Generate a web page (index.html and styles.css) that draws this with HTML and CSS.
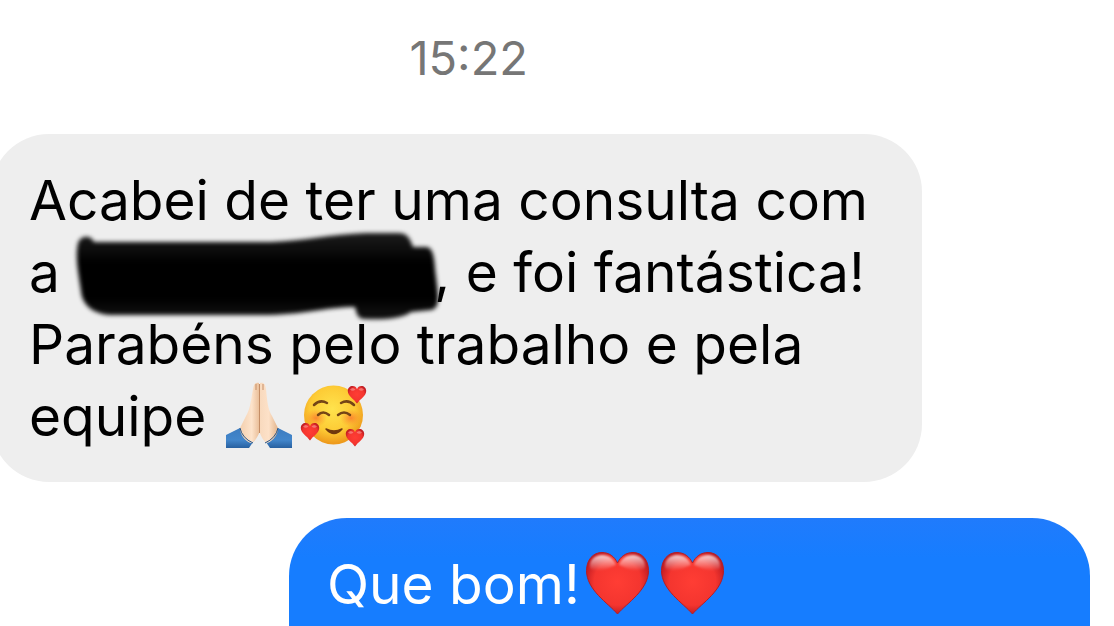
FILE: index.html
```html
<!DOCTYPE html>
<html lang="pt-BR">
<head>
<meta charset="utf-8">
<meta name="viewport" content="width=device-width, initial-scale=1">
<title>Conversa</title>
<link rel="stylesheet" href="styles.css">
</head>
<body>
<svg class="defs" aria-hidden="true">
  <defs>
    <radialGradient id="heartRed" cx="50%" cy="48%" r="58%">
      <stop offset="0" stop-color="#ff3d34"/>
      <stop offset=".65" stop-color="#f4352f"/>
      <stop offset="1" stop-color="#b5161f"/>
    </radialGradient>
    <linearGradient id="gloss" x1="0" y1="0" x2="0" y2="1">
      <stop offset="0" stop-color="#fff" stop-opacity=".8"/>
      <stop offset="1" stop-color="#fff" stop-opacity="0"/>
    </linearGradient>
    <radialGradient id="face" cx="48%" cy="40%" r="58%">
      <stop offset="0" stop-color="#ffe34d"/>
      <stop offset=".65" stop-color="#fdcb35"/>
      <stop offset="1" stop-color="#ee9a1c"/>
    </radialGradient>
    <radialGradient id="blush">
      <stop offset="0" stop-color="#fb6f2c" stop-opacity=".75"/>
      <stop offset="1" stop-color="#fb8f2c" stop-opacity="0"/>
    </radialGradient>
    <linearGradient id="skinLeft">
      <stop offset="0" stop-color="#f3cfae"/>
      <stop offset=".6" stop-color="#fde3cb"/>
      <stop offset="1" stop-color="#e9bd97"/>
    </linearGradient>
    <linearGradient id="skinRight">
      <stop offset="0" stop-color="#f8d9bd"/>
      <stop offset=".5" stop-color="#fde1c8"/>
      <stop offset="1" stop-color="#e2b38a"/>
    </linearGradient>
    <linearGradient id="sleeve" x1="0" y1="0" x2="0" y2="1">
      <stop offset="0" stop-color="#3d7cc0"/>
      <stop offset=".6" stop-color="#4286cb"/>
      <stop offset="1" stop-color="#28609f"/>
    </linearGradient>
    <linearGradient id="ink" x1="0" y1="0" x2="0" y2="1">
      <stop offset="0" stop-color="#1c1c1c"/>
      <stop offset=".35" stop-color="#000"/>
      <stop offset=".75" stop-color="#000"/>
      <stop offset="1" stop-color="#141414"/>
    </linearGradient>
    <filter id="soft" x="-5%" y="-15%" width="110%" height="130%" color-interpolation-filters="sRGB">
      <feGaussianBlur stdDeviation="2"/>
    </filter>
    <filter id="glow" x="-20%" y="-20%" width="140%" height="140%">
      <feGaussianBlur stdDeviation="1"/>
    </filter>
    <symbol id="heart" viewBox="0 0 75 66">
      <path d="M37.500 64C28 53 6.500 40 6.500 20.500C6.500 10 13 2.500 22 2.500C29 2.500 34.500 6.500 37.500 13C40.500 6.500 46 2.500 53 2.500C62 2.500 68.500 10 68.500 20.500C68.500 40 47 53 37.500 64Z" fill="url(#heartRed)" stroke="#b51d25" stroke-width="1"/>
      <path d="M10 18C9 10 15 5 22 5C29 5 34 9 36 15C28 18 18 24 10 18Z" fill="url(#gloss)" filter="url(#glow)"/>
      <path d="M65 18C66 10 60 5 53 5C46 5 41 9 39 15C47 18 57 24 65 18Z" fill="url(#gloss)" filter="url(#glow)"/>
    </symbol>
    <symbol id="miniHeart" viewBox="0 0 20 20">
      <path d="M10 18.500C7 14 .8 11 .8 6C.8 3 3 1 5.600 1C7.700 1 9.300 2.200 10 4.200C10.700 2.200 12.300 1 14.400 1C17 1 19.200 3 19.200 6C19.200 11 13 14 10 18.500Z" fill="url(#heartRed)"/>
      <path d="M3 4.500Q5.500 1.500 8.500 4.500Q5.500 7 3 4.500ZM11.500 4.500Q14.500 1.500 17 4.500Q14.500 7 11.500 4.500Z" fill="#fff" opacity=".3"/>
    </symbol>
  </defs>
</svg>
<main class="chat">
  <time class="chat-time" datetime="15:22">15:22</time>

  <p class="bubble bubble-in">Acabei de ter uma consulta com a <svg class="scribble" viewBox="74 233 363 88" role="img" aria-label="Nome ocultado">
      <path fill="url(#ink)" filter="url(#soft)" d="M77 244C80 236 90 236 93 243H270C304 242 330 235 365 234H397C407 234 409 240 412 248H426C434 250 433 264 435 278C437 296 440 309 430 311L410 313C401 320 380 321 363 320C356 320 355 312 354 308C326 308 303 316 260 316H108C89 314 81 304 80 292C77 272 74 257 77 244Z"/>
    </svg>, e foi fantástica! Parabéns pelo trabalho e pela equipe <svg class="emoji" viewBox="0 0 75 66" role="img" aria-label="Mãos em oração">
      <path d="M4 53L18 46L33 57L27 66H4Z" fill="url(#sleeve)"/>
      <path d="M70 53L56 46L42 57L48 66H70Z" fill="url(#sleeve)"/>
      <path d="M37 1C33 0 32 2 31 7C29 18 28 28 24 34L18 46C18 54 25 61 30 61C34 58 36 54 37.500 50Z" fill="url(#skinLeft)"/>
      <path d="M38 1C42 0 43 2 44 7C45 18 46 28 50 34L56 46C56 54 49 61 44 61C41 58 39 54 37.500 50Z" fill="url(#skinRight)"/>
      <path d="M37.500 2V51M34 2V8M41 2V8" fill="none" stroke="#c58e66" stroke-width="1"/>
      <path d="M18 46Q20 56 31 61M56 46Q54 56 43 61" fill="none" stroke="#245387" stroke-width="1"/>
    </svg><svg class="emoji" viewBox="0 0 75 66" role="img" aria-label="Rosto sorridente com corações">
      <circle cx="36.500" cy="33" r="29.500" fill="url(#face)"/>
      <ellipse cx="19" cy="36" rx="11" ry="9" fill="url(#blush)"/>
      <ellipse cx="54" cy="36" rx="11" ry="9" fill="url(#blush)"/>
      <path d="M17 23Q23 17 30 21M44 21Q51 17 57 23M21 33Q26 28 32 33M41 33Q47 28 53 33" fill="none" stroke="#754516" stroke-width="2.500" stroke-linecap="round"/>
      <path d="M29 47Q37 56 45 47Q37 51 29 47Z" fill="#70390e" stroke="#70390e" stroke-width="1.500" stroke-linejoin="round"/>
      <use href="#miniHeart" x="50" y="3" width="20" height="20"/>
      <use href="#miniHeart" x="3" y="40" width="20" height="20"/>
      <use href="#miniHeart" x="48" y="46" width="20" height="20"/>
    </svg></p>

  <p class="bubble bubble-out">Que bom!<svg class="emoji" role="img" aria-label="Coração vermelho"><use href="#heart"/></svg><svg class="emoji" role="img" aria-label="Coração vermelho"><use href="#heart"/></svg></p>
</main>
</body>
</html>
```

FILE: styles.css
```css
* {
  box-sizing: border-box;
}

body {
  margin: 0;
  background: #fff;
  font-family: Inter, Roboto, "Liberation Sans", sans-serif;
  overflow: hidden;
}

.defs {
  position: absolute;
  width: 0;
  height: 0;
}

.chat {
  display: flex;
  flex-direction: column;
  padding: 28px 24px 0 0;
}

.chat-time {
  width: 86%;
  margin-bottom: 46px;
  color: #767676;
  font-size: 47px;
  line-height: 60px;
  text-align: center;
}

.bubble {
  margin: 0;
  padding: 30px 38px;
  border-radius: 58px;
  font-size: 55px;
  line-height: 72px;
}

.bubble-in {
  align-self: flex-start;
  width: 931px;
  max-width: 100%;
  margin-left: -9px;
  background: #eee;
  color: #000;
}

.bubble-out {
  align-self: flex-end;
  width: 801px;
  max-width: 100%;
  margin-top: 36px;
  padding-bottom: 72px;
  background: linear-gradient(#207bfc, #167dff 40px);
  color: #fff;
}

.emoji {
  width: 75px;
  height: 66px;
  vertical-align: -12px;
}

.scribble {
  width: 363px;
  height: 88px;
  margin: -16px -4px -16px 0;
  vertical-align: -12px;
  overflow: visible;
}
```
